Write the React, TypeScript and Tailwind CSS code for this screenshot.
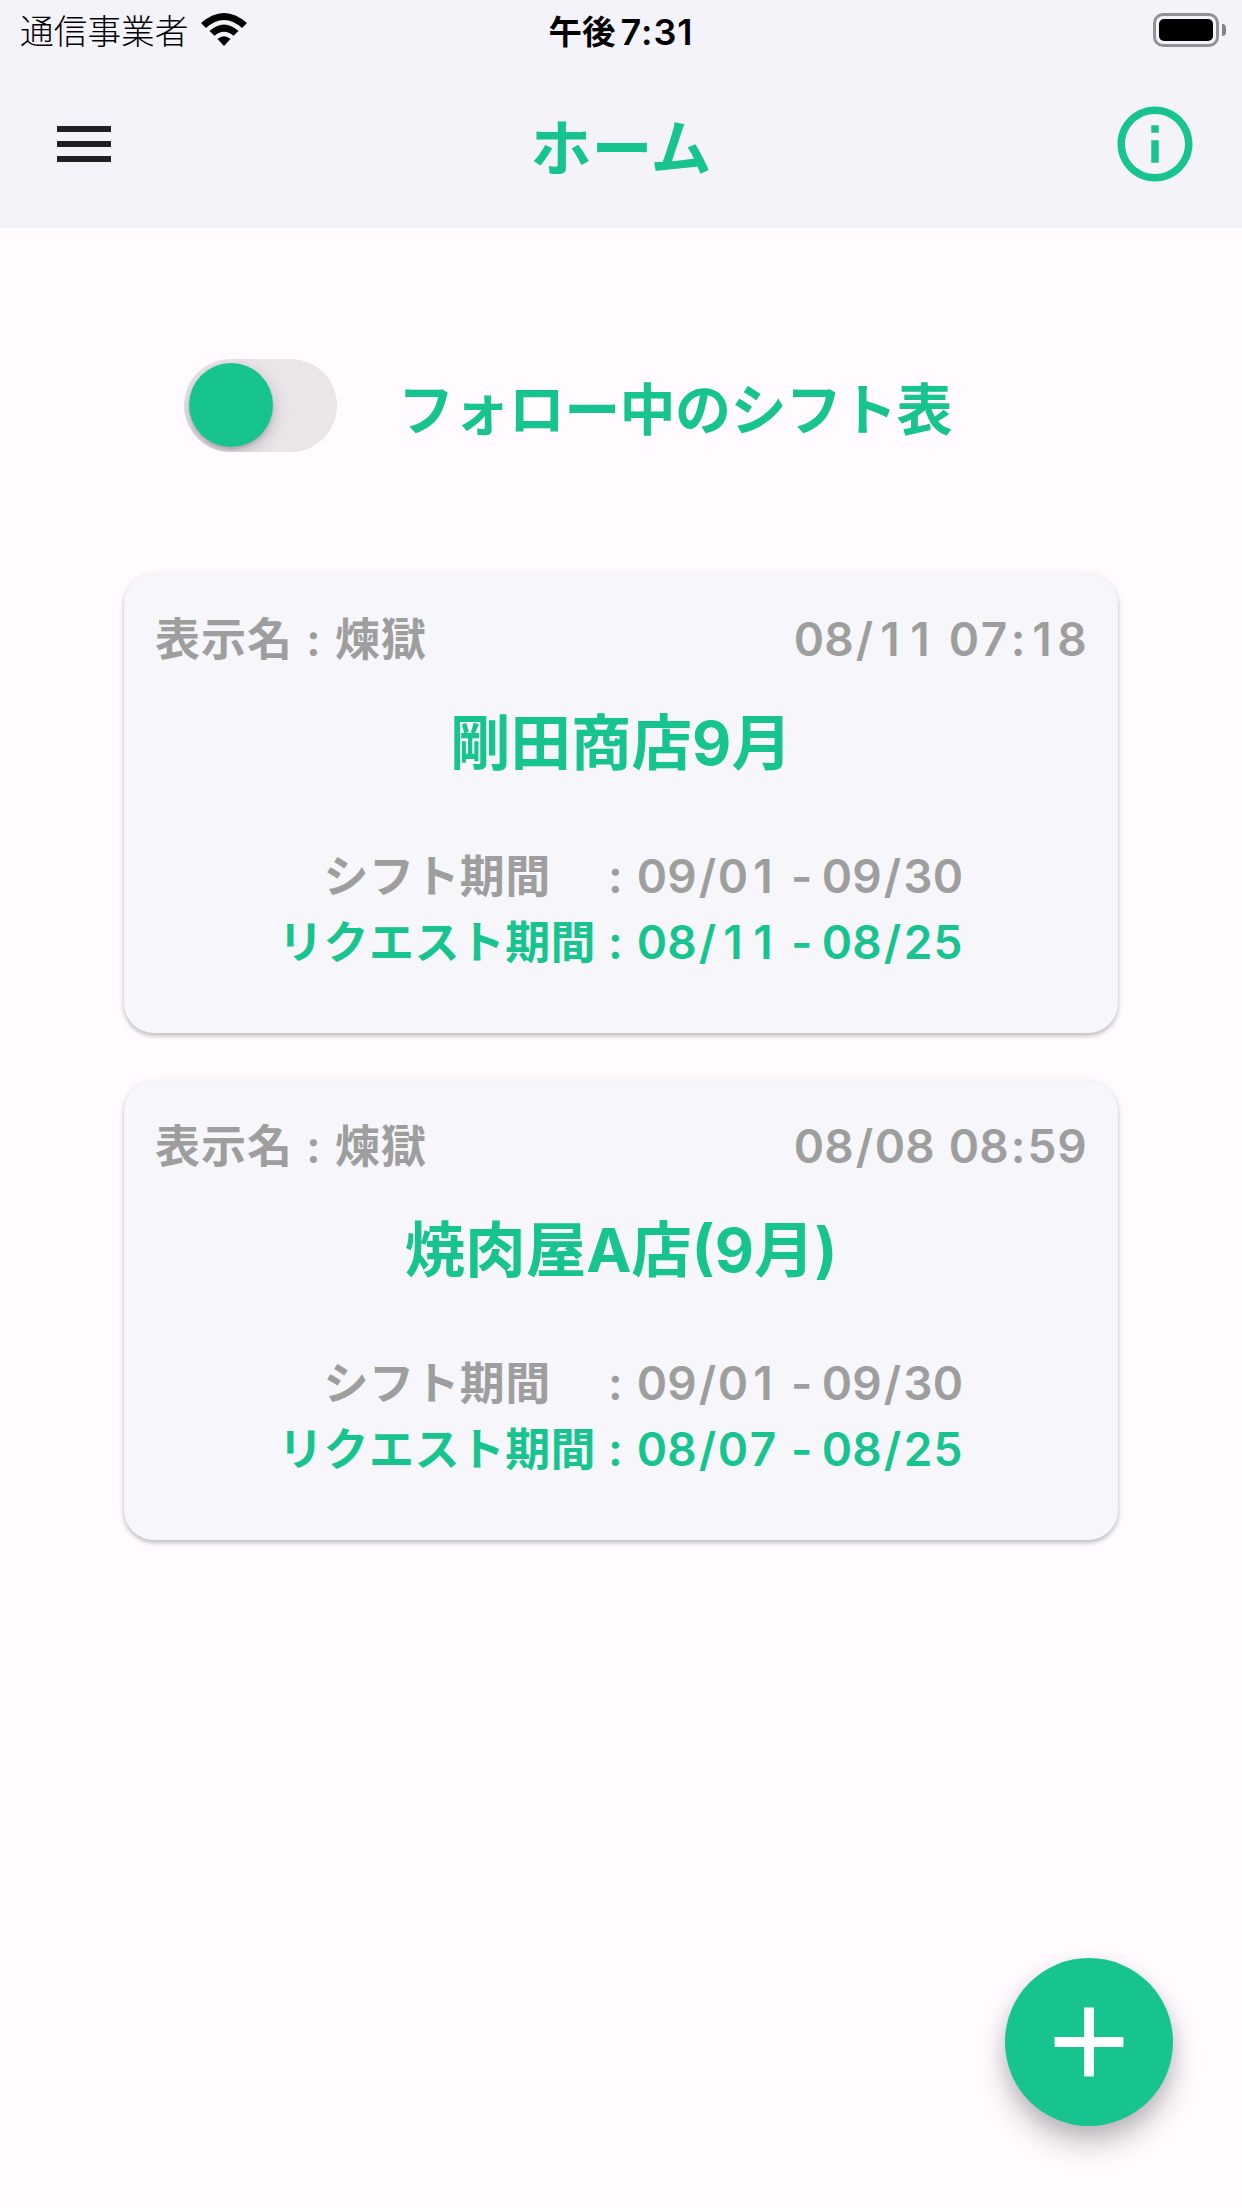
const GREEN = "#17c48f";

type Shift = {
  name: string;
  updated: string;
  title: string;
  period: [string, string];
  request: [string, string];
};

const shifts: Shift[] = [
  { name: "煉獄", updated: "08/11 07:18", title: "剛田商店9月", period: ["09/01", "09/30"], request: ["08/11", "08/25"] },
  { name: "煉獄", updated: "08/08 08:59", title: "焼肉屋A店(9月)", period: ["09/01", "09/30"], request: ["08/07", "08/25"] },
];

function StatusBar() {
  return (
    <div className="grid h-[60px] grid-cols-3 items-center pl-5 pr-4 text-black">
      <div className="flex h-[60px] items-center gap-[13px]">
        <span className="pt-[3px] text-[33.7px] leading-[50px] font-light">通信事業者</span>
        <svg width="46" height="33" viewBox="0 0 46 33" className="mb-[1px]">
          <path d="M0 10 Q23 -10 46 10 L41 15 Q23 -1 5 15Z" />
          <path d="M8.500 18 Q23 5 37.500 18 L32.500 22.800 Q23 14.500 13.500 22.800Z" />
          <path d="M16.500 26 Q23 20.500 29.500 26 L23 33Z" />
        </svg>
      </div>
      <div className="flex h-[60px] items-center justify-center gap-[5px] pr-1 leading-[50px] font-semibold">
        <span className="pt-[3px] text-[33.500px] font-bold">午後</span>
        <span className="pt-[3px] text-[36px] tracking-[1px]">7:31</span>
      </div>
      <div className="flex items-center justify-end gap-[3px]">
        <div className="h-[34px] w-[66px] rounded-[10px] border-[3px] border-[#929197] p-[3px]">
          <div className="h-full w-full rounded-[5px] bg-black" />
        </div>
        <div className="h-3 w-1 rounded-r-full bg-[#85848a]" />
      </div>
    </div>
  );
}

function AppBar() {
  return (
    <div className="grid h-[168px] grid-cols-[200px_1fr_200px] items-center">
      <div className="ml-[57px] flex w-[54px] flex-col gap-[9px]">
        <div className="h-1.5 bg-[#212121]" />
        <div className="h-1.5 bg-[#212121]" />
        <div className="h-1.5 bg-[#212121]" />
      </div>
      <h1 className="pt-2.5 text-center text-[61px] leading-[84px] font-bold text-[#17c48f]">ホーム</h1>
      <svg width="90" height="90" viewBox="0 0 24 24" fill={GREEN} className="mr-[42px] justify-self-end">
        <path d="M11 7h2v2h-2zm0 4h2v6h-2zm1-9C6.480 2 2 6.480 2 12s4.480 10 10 10 10-4.480 10-10S17.520 2 12 2zm0 18c-4.410 0-8-3.590-8-8s3.590-8 8-8 8 3.590 8 8-3.590 8-8 8z" />
      </svg>
    </div>
  );
}

const cellWidth: Record<string, string> = {
  "/": "w-[21px]",
  ":": "w-[18px]",
  " ": "w-[14px]",
};

// Lays digits out on equal-width cells so that dates line up between rows.
function Digits({ value }: { value: string }) {
  return (
    <span className="flex text-[46px] whitespace-pre">
      {value.split("").map((c, i) => (
        <span key={i} className={`flex justify-center ${cellWidth[c] ?? "w-[30px]"}`}>
          {c}
        </span>
      ))}
    </span>
  );
}

function PeriodRow({ label, range }: { label: string; range: [string, string] }) {
  return (
    <div className="flex h-[66px] items-center justify-end whitespace-pre">
      <span className="pt-0.5 text-[45px] tracking-[0.4px]">{label}</span>
      <span className="ml-3 w-[29px] text-[46px]">:</span>
      <Digits value={range[0]} />
      <span className="ml-[13px] w-[31px] text-[46px]">-</span>
      <Digits value={range[1]} />
    </div>
  );
}

function ShiftCard({ shift }: { shift: Shift }) {
  return (
    <section className="flex h-[459px] flex-col rounded-[30px] bg-[#f6f6fb] pt-[32px] pr-[31px] pl-[31px] font-semibold shadow-[0_3px_4px_rgba(0,0,0,0.2),0_1px_8px_rgba(0,0,0,0.08)]">
      <div className="flex h-[66px] items-center justify-between text-[#9e9e9e]">
        <span className="pt-0.5 text-[45px] tracking-[1px] [word-spacing:1px]">
          表示名 : {shift.name}
        </span>
        <Digits value={shift.updated} />
      </div>
      <h2 className="mt-[27px] h-[88px] text-center text-[60.500px] leading-[88px] font-bold text-[#17c48f]">{shift.title}</h2>
      <div className="mt-[56px] pr-[124px]">
        <div className="text-[#9e9e9e]">
          <PeriodRow label={"シフト期間　"} range={shift.period} />
        </div>
        <div className="text-[#17c48f]">
          <PeriodRow label="リクエスト期間" range={shift.request} />
        </div>
      </div>
    </section>
  );
}

export default function App() {
  return (
    <div className="relative h-[2208px] w-[1242px] overflow-hidden bg-[#fffbff] font-['Inter','Noto_Sans_CJK_JP',sans-serif]">
      <header className="bg-[#f4f3fa]">
        <StatusBar />
        <AppBar />
      </header>
      <main>
        <div className="mt-[130px] flex h-[94px] items-center pl-[184px]">
          <div className="h-[93px] w-[153px] overflow-hidden rounded-full bg-[#e9e5e9] p-[4.500px]">
            <div className="h-[84px] w-[84px] rounded-full bg-[#17c48f] shadow-[0_6px_18px_rgba(0,0,0,0.2),0_3px_3px_rgba(0,0,0,0.12)]" />
          </div>
          <span className="ml-[61px] pt-2.5 text-[56px] leading-[80px] font-bold tracking-[-0.6px] text-[#17c48f]">フォロー中のシフト表</span>
        </div>
        <div className="mt-[122px] flex flex-col gap-12 px-[124px]">
          {shifts.map((s) => (
            <ShiftCard key={s.title} shift={s} />
          ))}
        </div>
      </main>
      <button className="absolute right-[69px] bottom-[82px] flex h-[168px] w-[168px] items-center justify-center rounded-full bg-[#17c48f] shadow-[0_18px_30px_rgba(0,0,0,0.22),0_6px_18px_rgba(0,0,0,0.1)]">
        <svg width="118" height="118" viewBox="0 0 24 24" fill="white">
          <path d="M19 13h-6v6h-2v-6H5v-2h6V5h2v6h6v2z" />
        </svg>
      </button>
    </div>
  );
}
